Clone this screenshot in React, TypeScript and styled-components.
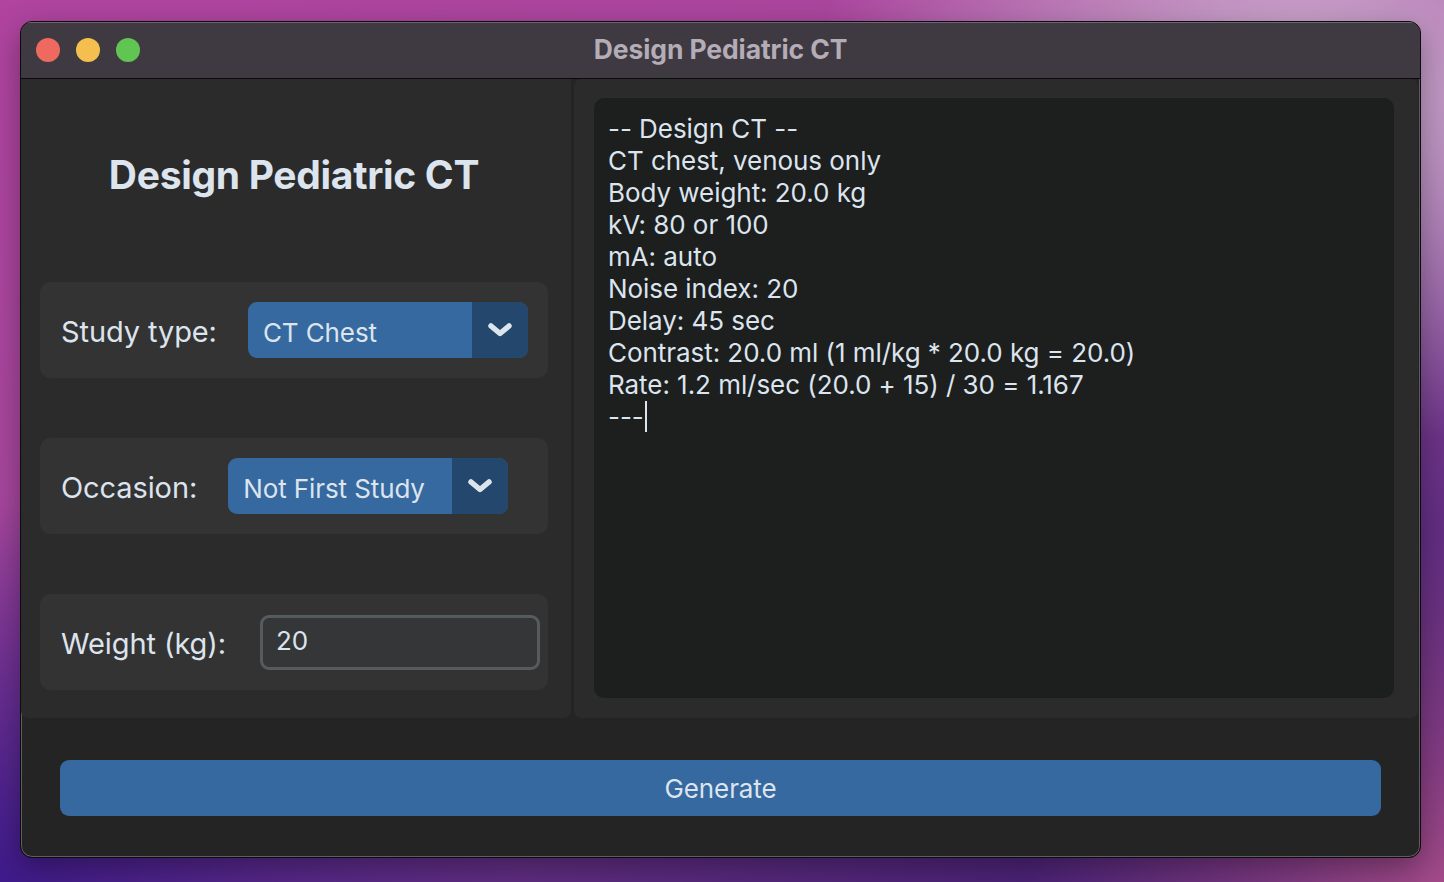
import React from "react";
import styled, { createGlobalStyle } from "styled-components";

const Global = createGlobalStyle`
  html, body { margin: 0; padding: 0; }
  body {
    width: 1444px;
    height: 882px;
    overflow: hidden;
    font-family: "Inter", "Noto Sans", sans-serif;
    background:
      radial-gradient(ellipse 700px 500px at 1300px 100px, rgba(210,190,215,0.95), rgba(210,190,215,0) 70%),
      radial-gradient(ellipse 600px 500px at 1444px 882px, rgba(175,80,140,0.9), rgba(175,80,140,0) 70%),
      radial-gradient(ellipse 700px 500px at 0px 882px, rgba(60,25,140,0.95), rgba(60,25,140,0) 75%),
      linear-gradient(160deg, #b0449f 0%, #a8479e 35%, #7a3a8f 60%, #3a1a70 100%);
  }
  #root { width: 1444px; height: 882px; }
`;

const Desktop = styled.div`
  width: 1444px;
  height: 882px;
  box-sizing: border-box;
  padding: 21px 23px 24px 20px;
`;

const Window = styled.div`
  width: 1401px;
  height: 837px;
  box-sizing: border-box;
  border: 1px solid #0c0c0e;
  border-radius: 12px;
  overflow: hidden;
  background: #242424;
  box-shadow: inset 0 0 0 1px #5e5d62, 0 10px 30px rgba(0,0,0,0.35);
  display: flex;
  flex-direction: column;
`;

const TitleBar = styled.div`
  height: 56px;
  flex: none;
  background: #3f3a42;
  border-bottom: 1px solid #0a0a0a;
  box-shadow: inset 0 1px 0 #6a666d;
  display: flex;
  align-items: center;
  position: relative;
  padding-left: 15px;
  gap: 16px;
`;

const Light = styled.span<{ $c: string }>`
  width: 24px;
  height: 24px;
  border-radius: 50%;
  background: ${(p) => p.$c};
`;

const WindowTitle = styled.div`
  position: absolute;
  left: 0;
  right: 0;
  top: 0;
  bottom: 2px;
  display: flex;
  align-items: center;
  justify-content: center;
  font-size: 26.5px;
  font-weight: 700;
  color: #b4acb6;
  letter-spacing: -0.1px;
  pointer-events: none;
`;

const Body = styled.div`
  flex: 1;
  display: flex;
  flex-direction: column;
`;

const Panels = styled.div`
  height: 639px;
  display: flex;
  gap: 3px;
  padding-right: 2px;
`;

const LeftPanel = styled.div`
  width: 550px;
  flex: none;
  background: #2b2b2b;
  border-radius: 0 0 7px 7px;
  box-sizing: border-box;
  padding: 72px 23px 28px 19px;
  display: flex;
  flex-direction: column;
`;

const RightPanel = styled.div`
  flex: 1;
  background: #2b2b2b;
  border-radius: 7px;
  box-sizing: border-box;
  padding: 19px 24px 20px 20px;
  display: flex;
`;

const PanelTitle = styled.h1`
  margin: 0 0 83px;
  font-size: 39px;
  line-height: 48px;
  font-weight: 700;
  color: #dce4ee;
  text-align: center;
  letter-spacing: -0.3px;
`;

const Card = styled.div`
  height: 96px;
  flex: none;
  box-sizing: border-box;
  background: #333333;
  border-radius: 10px;
  padding: 0 8px 0 21px;
  display: flex;
  align-items: center;
  gap: 31px;
  & + & { margin-top: 60px; }
`;

const Label = styled.span<{ $extra?: number }>`
  font-size: 29px;
  color: #dce4ee;
  letter-spacing: -0.1px;
  white-space: nowrap;
  flex: none;
  padding-top: 3px;
  margin-right: ${(p) => p.$extra ?? 0}px;
`;

const Dropdown = styled.div`
  width: 280px;
  height: 56px;
  flex: none;
  border-radius: 9px;
  overflow: hidden;
  display: flex;
  background: #36699f;
`;

const DropValue = styled.div`
  flex: 1;
  display: flex;
  align-items: center;
  padding-left: 15px;
  padding-top: 5px;
  font-size: 26px;
  color: #dce4ee;
  letter-spacing: -0.1px;
  white-space: nowrap;
`;

const DropArrow = styled.div`
  width: 56px;
  background: #24486d;
  display: flex;
  align-items: center;
  justify-content: center;
`;

const Entry = styled.div`
  width: 280px;
  height: 55px;
  flex: none;
  box-sizing: border-box;
  border: 3px solid #565b5e;
  border-radius: 9px;
  background: #343638;
  display: flex;
  align-items: center;
  padding: 0 0 4px 13px;
  font-size: 26px;
  color: #dce4ee;
`;

const TextBox = styled.div`
  flex: 1;
  background: #1d1e1e;
  border-radius: 10px;
  padding: 15px 14px;
  box-sizing: border-box;
  font-size: 26px;
  line-height: 32px;
  color: #dce4ee;
  letter-spacing: -0.05px;
  white-space: pre;
`;

const Caret = styled.span`
  display: inline-block;
  width: 2px;
  height: 31px;
  background: #dce4ee;
  vertical-align: -6px;
  margin-left: 1px;
`;

const Footer = styled.div`
  flex: 1;
  padding: 42px 39px 0;
`;

const Button = styled.button`
  width: 100%;
  height: 56px;
  border: none;
  border-radius: 9px;
  background: #36699f;
  color: #dce4ee;
  font-family: inherit;
  font-size: 26px;
  letter-spacing: -0.1px;
`;

const Chevron = () => (
  <svg width="26" height="18" viewBox="0 0 26 18">
    <polyline
      points="4,5 13,12.5 22,5"
      fill="none"
      stroke="#dce4ee"
      strokeWidth="5.5"
      strokeLinecap="round"
      strokeLinejoin="round"
    />
  </svg>
);

const lines = [
  "-- Design CT --",
  "CT chest, venous only",
  "Body weight: 20.0 kg",
  "kV: 80 or 100",
  "mA: auto",
  "Noise index: 20",
  "Delay: 45 sec",
  "Contrast: 20.0 ml (1 ml/kg * 20.0 kg = 20.0)",
  "Rate: 1.2 ml/sec (20.0 + 15) / 30 = 1.167",
];

export default function App() {
  return (
    <>
      <Global />
      <Desktop>
        <Window>
          <TitleBar>
            <Light $c="#ee6a5f" />
            <Light $c="#f5bf4f" />
            <Light $c="#61c554" />
            <WindowTitle>Design Pediatric CT</WindowTitle>
          </TitleBar>
          <Body>
            <Panels>
              <LeftPanel>
                <PanelTitle>Design Pediatric CT</PanelTitle>
                <Card>
                  <Label>Study type:</Label>
                  <Dropdown>
                    <DropValue>CT Chest</DropValue>
                    <DropArrow>
                      <Chevron />
                    </DropArrow>
                  </Dropdown>
                </Card>
                <Card>
                  <Label>Occasion:</Label>
                  <Dropdown>
                    <DropValue>Not First Study</DropValue>
                    <DropArrow>
                      <Chevron />
                    </DropArrow>
                  </Dropdown>
                </Card>
                <Card>
                  <Label $extra={3}>Weight (kg):</Label>
                  <Entry>20</Entry>
                </Card>
              </LeftPanel>
              <RightPanel>
                <TextBox>
                  {lines.join("\n") + "\n---"}
                  <Caret />
                </TextBox>
              </RightPanel>
            </Panels>
            <Footer>
              <Button>Generate</Button>
            </Footer>
          </Body>
        </Window>
      </Desktop>
    </>
  );
}
